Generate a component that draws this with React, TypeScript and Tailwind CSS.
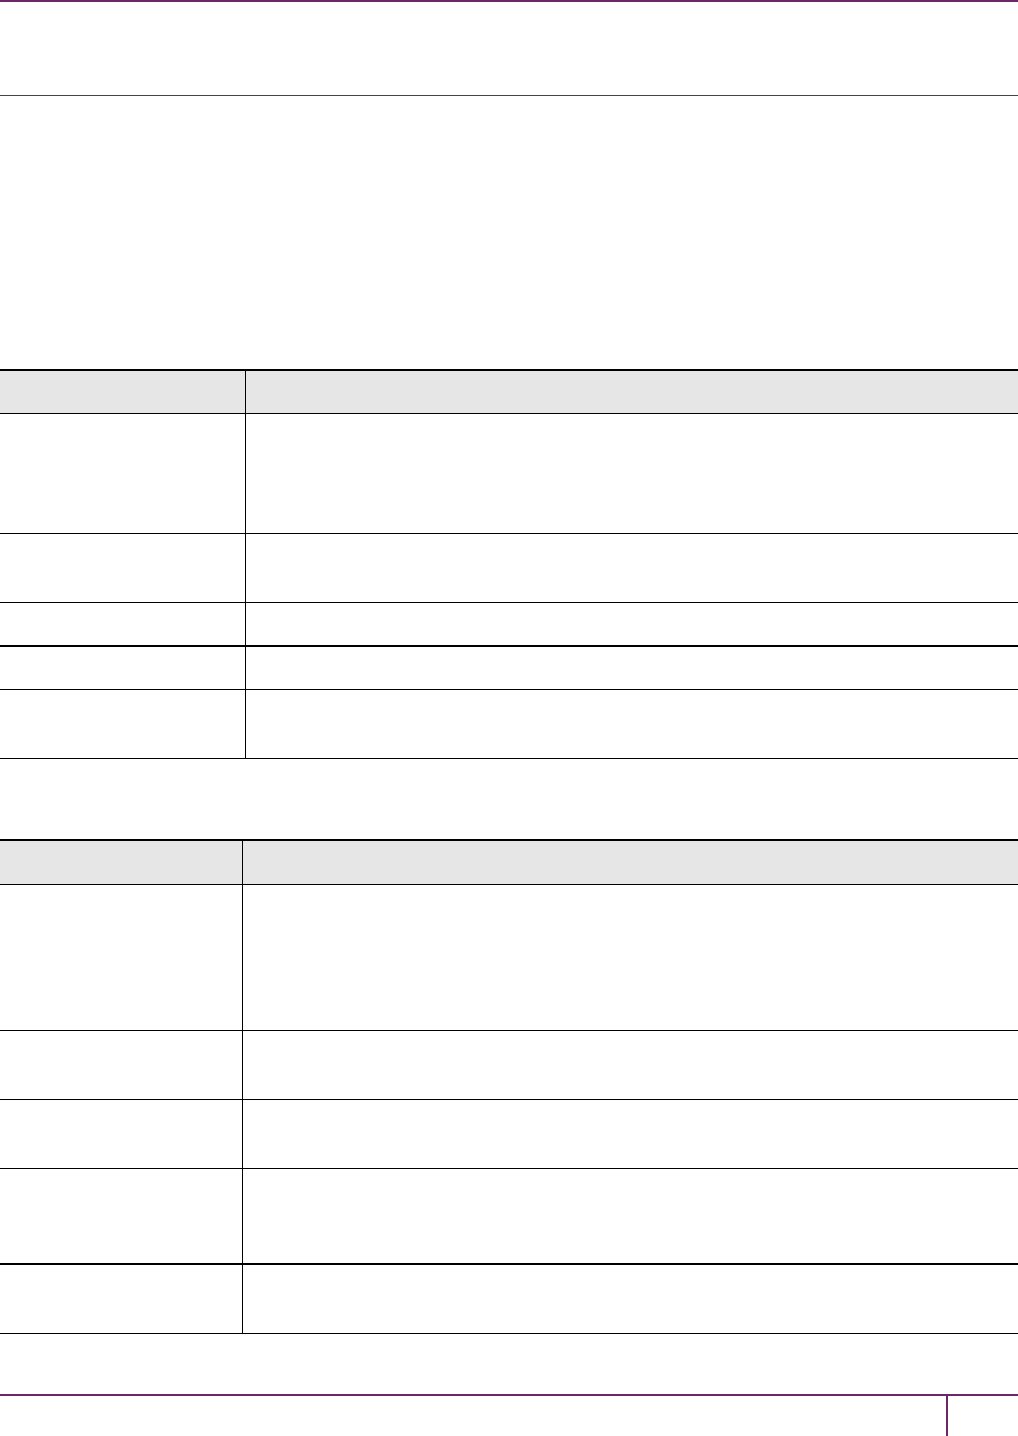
type Row = { h: string; thick?: boolean };

// heights include the bottom border (border-box)
const table1: Row[] = [
  { h: "h-[120px]" },
  { h: "h-[69px]" },
  { h: "h-[44px]", thick: true },
  { h: "h-[43px]" },
  { h: "h-[69px]" },
];

const table2: Row[] = [
  { h: "h-[146px]" },
  { h: "h-[69px]" },
  { h: "h-[69px]" },
  { h: "h-[96px]", thick: true },
  { h: "h-[69px]" },
];

function Table({ rows, col, head }: { rows: Row[]; col: string; head: string }) {
  return (
    <div className="w-full border-t-2 border-black">
      <div className={`grid ${col} ${head} bg-[#e6e6e6] border-b border-black`}>
        <div className="border-r border-black" />
        <div />
      </div>
      {rows.map((r, i) => (
        <div
          key={i}
          className={`grid ${col} ${r.h} ${r.thick ? "border-b-2" : "border-b"} border-black`}
        >
          <div className="border-r border-black" />
          <div />
        </div>
      ))}
    </div>
  );
}

export default function App() {
  return (
    <div className="w-[1018px] h-[1436px] bg-white flex flex-col overflow-hidden font-['Liberation_Sans',sans-serif]">
      <div className="h-[2px] bg-[#6c2767]" />
      <div className="h-[93px]" />
      <div className="h-px bg-[#5e3159]" />
      <div className="h-[273px]" />
      <Table rows={table1} col="grid-cols-[246px_1fr]" head="h-[43px]" />
      <div className="h-[80px]" />
      <Table rows={table2} col="grid-cols-[243px_1fr]" head="h-[44px]" />
      <div className="h-[60px]" />
      <div className="h-[2px] bg-[#6c2767]" />
      <div className="flex-1 flex">
        <div className="w-[946px]" />
        <div className="w-[2px] bg-[#6c2767]" />
      </div>
    </div>
  );
}
